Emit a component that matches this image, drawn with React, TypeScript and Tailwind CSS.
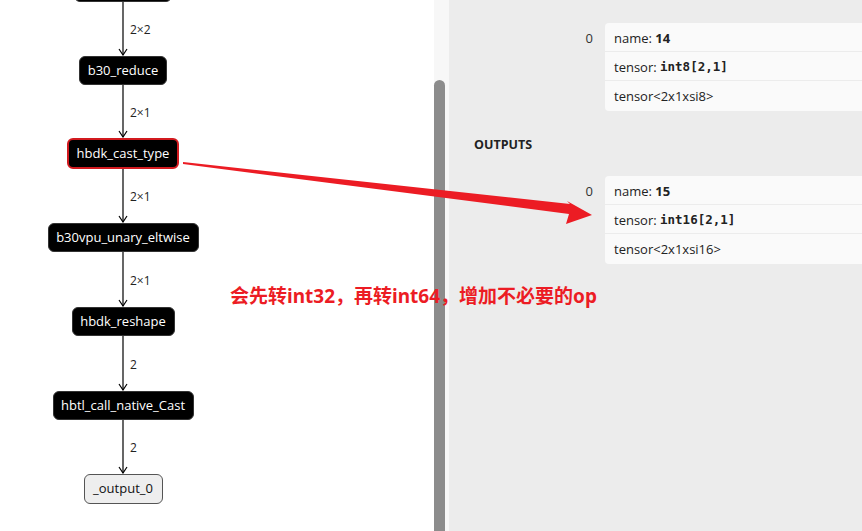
import React from 'react';

const sans = "font-['Open_Sans','Noto_Sans',sans-serif]";
const mono = "font-['DejaVu_Sans_Mono','Liberation_Mono',monospace]";

function Edge({ label, h = 54 }: { label: string; h?: number }) {
  return (
    <div className="relative w-full flex justify-center" style={{ height: h }}>
      <svg width="12" height={h} className="block">
        <line x1="6" y1="0" x2="6" y2={h - 1} stroke="#000" strokeWidth="1.2" />
        <path d={`M2 ${h - 7} L6 ${h - 1} L10 ${h - 7}`} fill="none" stroke="#000" strokeWidth="1.2" />
      </svg>
      <span className={`absolute left-[130px] text-[12px] text-[#222] ${sans}`} style={{ top: h / 2 - 8 }}>
        {label}
      </span>
    </div>
  );
}

function Node({ name, w, hl = false }: { name: string; w: number; hl?: boolean }) {
  return (
    <div
      className={`flex items-center justify-center rounded-[6px] bg-black text-white text-[13px] ${sans} ${
        hl ? 'h-[31px] border-2 border-[#d21a1f]' : 'h-[29px] border border-[#333]'
      }`}
      style={{ width: w }}
    >
      {name}
    </div>
  );
}

function Card({ name, type, mlir }: { name: string; type: string; mlir: string }) {
  return (
    <div className="flex">
      <div className={`w-[156px] shrink-0 pr-[12px] pt-[6px] text-right text-[13px] text-[#333] ${sans}`}>0</div>
      <div className={`flex-1 rounded-l-[4px] bg-[#fafafa] text-[13px] text-[#222] ${sans}`}>
        <div className="h-[29px] flex items-center px-[9px] pt-[3px] border-b border-[#ececec]">
          name:&nbsp;<b className="font-bold">{name}</b>
        </div>
        <div className="h-[29px] flex items-center px-[9px] pt-[3px] border-b border-[#ececec]">
          tensor:&nbsp;<b className={`font-bold ${mono} text-[12.5px]`}>{type}</b>
        </div>
        <div className="h-[30px] flex items-center px-[9px] pt-[1px]">{mlir}</div>
      </div>
    </div>
  );
}

export default function App() {
  return (
    <div className="relative w-[862px] h-[531px] overflow-hidden flex bg-white">
      {/* graph canvas */}
      <div className="w-[434px] shrink-0 bg-white">
        <div className="w-[246px] flex flex-col items-center">
          <div className="w-[98px] h-[29px] -mt-[27px] rounded-[6px] bg-black border border-[#333]" />
          <Edge label="2×2" />
          <Node name="b30_reduce" w={88} />
          <Edge label="2×1" h={53} />
          <Node name="hbdk_cast_type" w={112} hl />
          <Edge label="2×1" h={54} />
          <Node name="b30vpu_unary_eltwise" w={151} />
          <Edge label="2×1" h={55} />
          <Node name="hbdk_reshape" w={103} />
          <Edge label="2" h={55} />
          <Node name="hbtl_call_native_Cast" w={141} />
          <Edge label="2" h={54} />
          <div
            className={`w-[79px] h-[30px] flex items-center justify-center rounded-[6px] bg-[#eeeeee] border border-[#555] text-[13px] text-[#111] ${sans}`}
          >
            _output_0
          </div>
        </div>
      </div>

      {/* scrollbar */}
      <div className="w-[15px] shrink-0 flex bg-[#f7f7f7]">
        <div className="w-[11px] mt-[80px] rounded-t-[6px] bg-[#8c8c8c]" />
      </div>

      {/* properties panel */}
      <div className="flex-1 bg-[#ececec] overflow-hidden">
        <div className="-mr-[10px] pt-[23px]">
          <Card name="14" type="int8[2,1]" mlir="tensor<2x1xsi8>" />
          <div className={`pl-[25px] pt-[25px] pb-[21px] text-[12.5px] font-bold text-[#222] ${sans}`}>OUTPUTS</div>
          <Card name="15" type="int16[2,1]" mlir="tensor<2x1xsi16>" />
        </div>
      </div>

      {/* annotation overlay */}
      <svg className="absolute left-0 top-0 pointer-events-none" width="862" height="531">
        <polygon points="183,162 570,204 567,201 592,215 566,224 569,214 183,164" fill="#ec1c24" />
      </svg>
      <div
        className={`absolute left-[230px] top-[284px] text-[19px] font-bold text-[#ec1c24] font-['Noto_Sans','Noto_Sans_CJK_SC',sans-serif] leading-[24px] whitespace-nowrap`}
      >
        会先转int32，再转int64，增加不必要的op
      </div>
    </div>
  );
}
